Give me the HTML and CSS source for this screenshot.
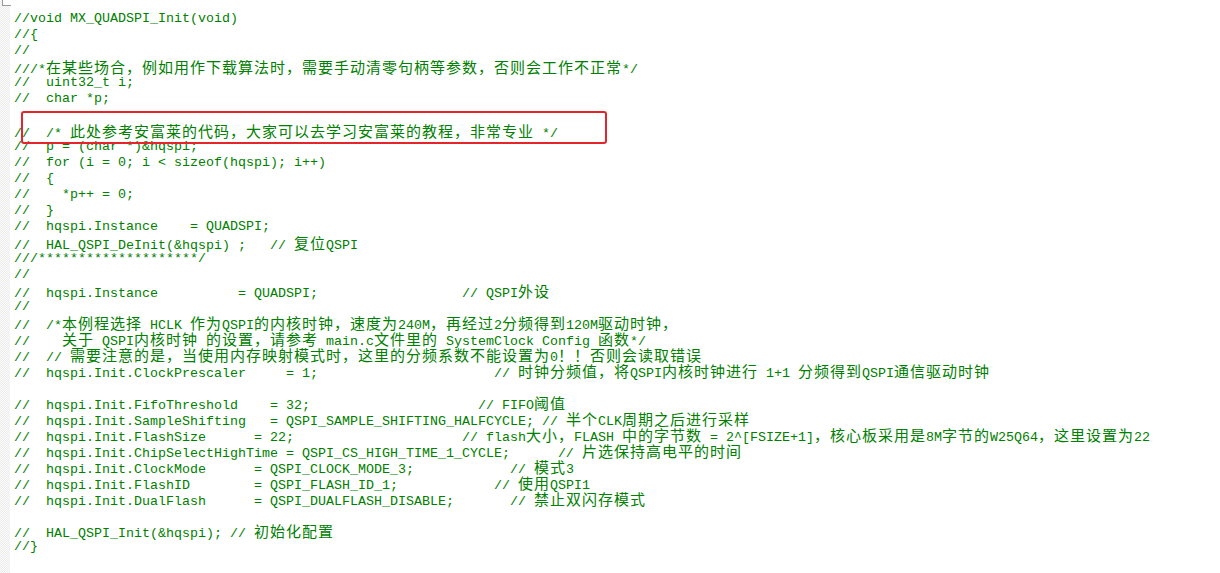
FILE: index.html
```html
<!DOCTYPE html>
<html>
<head>
<meta charset="utf-8">
<link rel="stylesheet" href="styles.css">
</head>
<body>
<div class="editor">
  <div class="gutter"><div class="corner"></div></div>
  <div class="code">
    <div class="ln">//void MX_QUADSPI_Init(void)</div>
    <div class="ln">//{</div>
    <div class="ln">//</div>
    <div class="ln">///*<span class="c">在某些场合，例如用作下载算法时，需要手动清零句柄等参数，否则会工作不正常</span>*/</div>
    <div class="ln">//  uint32_t i;</div>
    <div class="ln">//  char *p;</div>
    <div class="ln"></div>
    <div class="ln">//  /* <span class="c">此处参考安富莱的代码，大家可以去学习安富莱的教程，非常专业</span> */</div>
    <div class="ln">//  p = (char *)&amp;hqspi;</div>
    <div class="ln">//  for (i = 0; i &lt; sizeof(hqspi); i++)</div>
    <div class="ln">//  {</div>
    <div class="ln">//    *p++ = 0;</div>
    <div class="ln">//  }</div>
    <div class="ln">//  hqspi.Instance    = QUADSPI;</div>
    <div class="ln">//  HAL_QSPI_DeInit(&amp;hqspi) ;   // <span class="c">复位</span>QSPI</div>
    <div class="ln">///********************/</div>
    <div class="ln">//</div>
    <div class="ln">//  hqspi.Instance          = QUADSPI;                  // QSPI<span class="c">外设</span></div>
    <div class="ln">//</div>
    <div class="ln">//  /*<span class="c">本例程选择</span> HCLK <span class="c">作为</span>QSPI<span class="c">的内核时钟，速度为</span>240M<span class="c">，再经过</span>2<span class="c">分频得到</span>120M<span class="c">驱动时钟，</span></div>
    <div class="ln">//    <span class="c">关于</span> QSPI<span class="c">内核时钟</span> <span class="c">的设置，请参考</span> main.c<span class="c">文件里的</span> SystemClock Config <span class="c">函数</span>*/</div>
    <div class="ln">//  // <span class="c">需要注意的是，当使用内存映射模式时，这里的分频系数不能设置为</span>0<span class="c">！！否则会读取错误</span></div>
    <div class="ln">//  hqspi.Init.ClockPrescaler     = 1;                      // <span class="c">时钟分频值，将</span>QSPI<span class="c">内核时钟进行</span> 1+1 <span class="c">分频得到</span>QSPI<span class="c">通信驱动时钟</span></div>
    <div class="ln"></div>
    <div class="ln">//  hqspi.Init.FifoThreshold    = 32;                     // FIFO<span class="c">阈值</span></div>
    <div class="ln">//  hqspi.Init.SampleShifting   = QSPI_SAMPLE_SHIFTING_HALFCYCLE; // <span class="c">半个</span>CLK<span class="c">周期之后进行采样</span></div>
    <div class="ln">//  hqspi.Init.FlashSize      = 22;                     // flash<span class="c">大小，</span>FLASH <span class="c">中的字节数</span> = 2^[FSIZE+1]<span class="c">，核心板采用是</span>8M<span class="c">字节的</span>W25Q64<span class="c">，这里设置为</span>22</div>
    <div class="ln">//  hqspi.Init.ChipSelectHighTime = QSPI_CS_HIGH_TIME_1_CYCLE;      // <span class="c">片选保持高电平的时间</span></div>
    <div class="ln">//  hqspi.Init.ClockMode      = QSPI_CLOCK_MODE_3;            // <span class="c">模式</span>3</div>
    <div class="ln">//  hqspi.Init.FlashID        = QSPI_FLASH_ID_1;            // <span class="c">使用</span>QSPI1</div>
    <div class="ln">//  hqspi.Init.DualFlash      = QSPI_DUALFLASH_DISABLE;       // <span class="c">禁止双闪存模式</span></div>
    <div class="ln"></div>
    <div class="ln">//  HAL_QSPI_Init(&amp;hqspi); // <span class="c">初始化配置</span></div>
    <div class="ln">//}</div>
    <div class="mark"></div>
  </div>
</div>
</body>
</html>
```

FILE: styles.css
```css
html, body {
  margin: 0;
  padding: 0;
  background: #ffffff;
}

.editor {
  display: flex;
  width: 1220px;
  height: 573px;
  overflow: hidden;
  background: #ffffff;
}

.gutter {
  width: 10px;
  flex: none;
  background: repeating-conic-gradient(#ececec 0 25%, #fbfbfb 0 50%) 0 0 / 2px 2px;
}

.corner {
  width: 8px;
  height: 5px;
  margin-left: 2px;
  border-left: 1px solid #9a9a9a;
  border-bottom: 1px solid #9a9a9a;
  background: #ffffff;
}

.code {
  position: relative;
  margin-left: 4px;
  padding-top: 11px;
  font-family: "Liberation Mono", "Courier New", monospace;
  font-size: 13.33px;
  color: #008000;
}

.ln {
  height: 16px;
  line-height: 16px;
  white-space: pre;
}

.c {
  font-family: "Noto Sans CJK SC", "Noto Sans", sans-serif;
  font-size: 15px;
  letter-spacing: 1px;
  line-height: 16px;
}

.mark {
  position: absolute;
  left: 7px;
  top: 111px;
  width: 582px;
  height: 29px;
  border: 2px solid #e5252a;
  border-radius: 3px;
}
```
